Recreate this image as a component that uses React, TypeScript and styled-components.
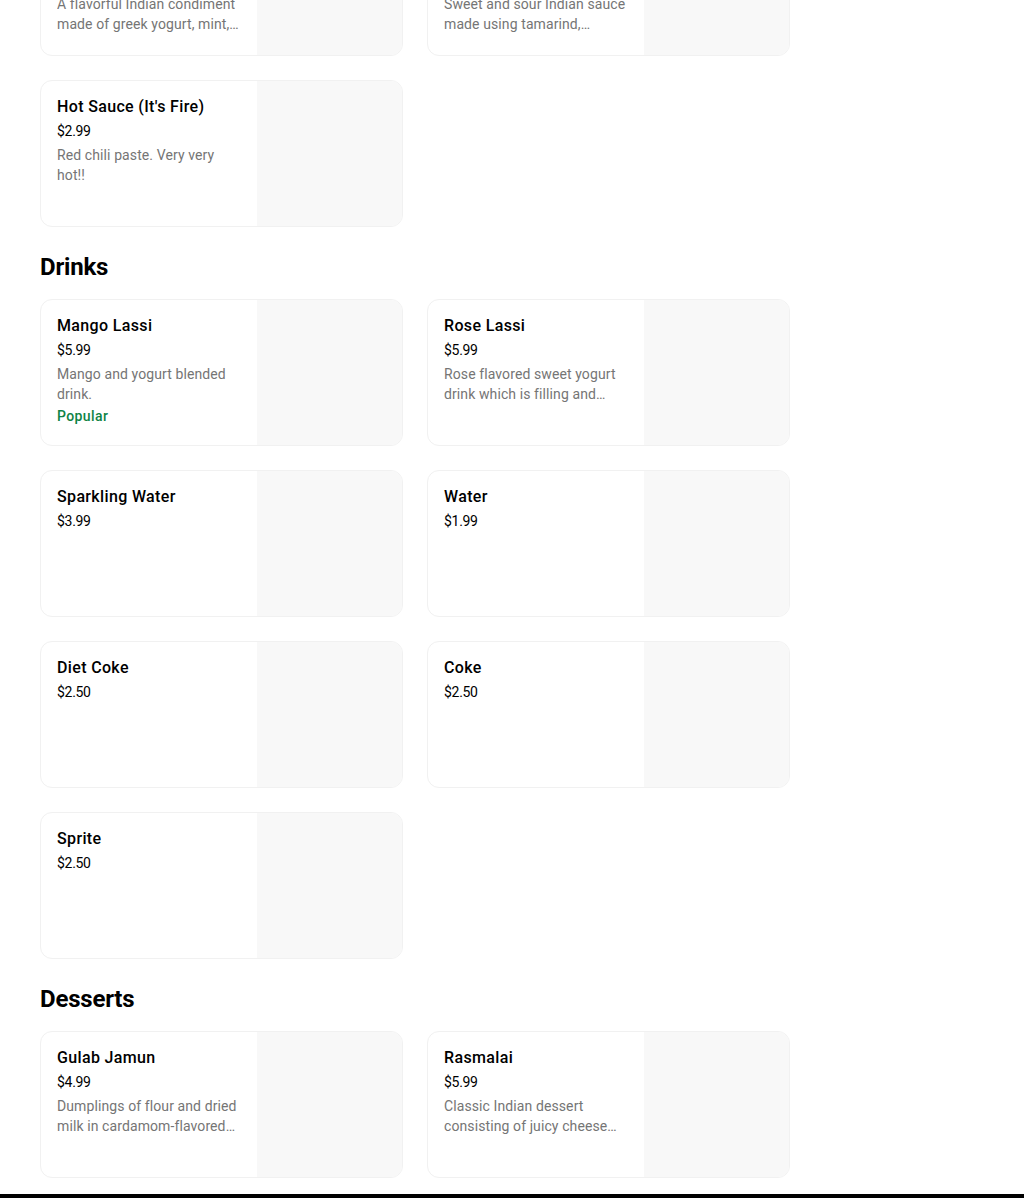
import styled, { createGlobalStyle } from "styled-components";

const GlobalStyle = createGlobalStyle`
  * { box-sizing: border-box; }
  body {
    margin: 0;
    background: #ffffff;
    font-family: Roboto, "Noto Sans", "Liberation Sans", sans-serif;
    color: #000000;
    overflow: hidden;
  }
`;

type Item = {
  name: string;
  price: string;
  desc?: string;
  popular?: boolean;
};

type Section = {
  title?: string;
  items: Item[];
};

const sections: Section[] = [
  {
    items: [
      {
        name: "Raita (Yogurt and Cucumber Dip)",
        price: "$2.99",
        desc: "A flavorful Indian condiment made of greek yogurt, mint,\ncucumber and spices.",
      },
      {
        name: "Tamarind Chutney (Imli Sauce)",
        price: "$2.99",
        desc: "Sweet and sour Indian sauce made using tamarind,\njaggery and spices.",
      },
      {
        name: "Hot Sauce (It's Fire)",
        price: "$2.99",
        desc: "Red chili paste. Very very hot!!",
      },
    ],
  },
  {
    title: "Drinks",
    items: [
      { name: "Mango Lassi", price: "$5.99", desc: "Mango and yogurt blended drink.", popular: true },
      {
        name: "Rose Lassi",
        price: "$5.99",
        desc: "Rose flavored sweet yogurt drink which is filling and refreshing.",
      },
      { name: "Sparkling Water", price: "$3.99" },
      { name: "Water", price: "$1.99" },
      { name: "Diet Coke", price: "$2.50" },
      { name: "Coke", price: "$2.50" },
      { name: "Sprite", price: "$2.50" },
    ],
  },
  {
    title: "Desserts",
    items: [
      {
        name: "Gulab Jamun",
        price: "$4.99",
        desc: "Dumplings of flour and dried milk in cardamom-flavored sugar syrup.",
      },
      {
        name: "Rasmalai",
        price: "$5.99",
        desc: "Classic Indian dessert consisting of juicy cheese patties in sweetened milk.",
      },
    ],
  },
];

export default function App() {
  return (
    <>
      <GlobalStyle />
      <Page>
        <Menu>
          {sections.map((section, i) => (
            <MenuSection key={i}>
              {section.title && <SectionTitle>{section.title}</SectionTitle>}
              <Grid $scrolled={i === 0}>
                {section.items.map((item) => (
                  <Card key={item.name}>
                    <Info>
                      <ItemName>{item.name}</ItemName>
                      <Price>{item.price}</Price>
                      {item.desc && <Desc>{item.desc}</Desc>}
                      {item.popular && <Popular>Popular</Popular>}
                    </Info>
                    <Thumb />
                  </Card>
                ))}
              </Grid>
            </MenuSection>
          ))}
        </Menu>
      </Page>
      <Footer />
    </>
  );
}

const Page = styled.main`
  padding: 0 40px 16px;
`;

const Menu = styled.div`
  width: 750px;
`;

const MenuSection = styled.section`
  display: flex;
  flex-direction: column;
`;

const SectionTitle = styled.h2`
  margin: 24px 0 16px;
  font-size: 24px;
  line-height: 32px;
  font-weight: 700;
  letter-spacing: -0.2px;
`;

const Grid = styled.div<{ $scrolled?: boolean }>`
  display: grid;
  grid-template-columns: repeat(2, 363px);
  gap: 24px;
  margin-top: ${(p) => (p.$scrolled ? "-91px" : "0")};
`;

const Card = styled.div`
  display: flex;
  height: 147px;
  border: 1px solid #f1f1f1;
  border-radius: 12px;
  overflow: hidden;
  background: #ffffff;
`;

const Info = styled.div`
  flex: 1;
  min-width: 0;
  padding: 16px;
  display: flex;
  flex-direction: column;
`;

const ItemName = styled.div`
  font-size: 16px;
  line-height: 20px;
  font-weight: 500;
  letter-spacing: 0.35px;
  color: #000000;
`;

const Price = styled.div`
  margin-top: 4px;
  font-size: 14px;
  line-height: 20px;
  color: #000000;
  letter-spacing: -0.3px;
`;

const Desc = styled.div`
  margin-top: 4px;
  font-size: 14px;
  line-height: 20px;
  letter-spacing: 0.1px;
  color: #757575;
  white-space: pre-line;
  display: -webkit-box;
  -webkit-line-clamp: 2;
  -webkit-box-orient: vertical;
  overflow: hidden;
`;

const Popular = styled.div`
  margin-top: 2px;
  font-size: 14px;
  line-height: 20px;
  font-weight: 500;
  letter-spacing: 0.4px;
  color: #0e8345;
`;

const Thumb = styled.div`
  flex: 0 0 145px;
  height: 145px;
  background: #f8f8f8;
`;

const Footer = styled.footer`
  height: 120px;
  background: #000000;
`;
